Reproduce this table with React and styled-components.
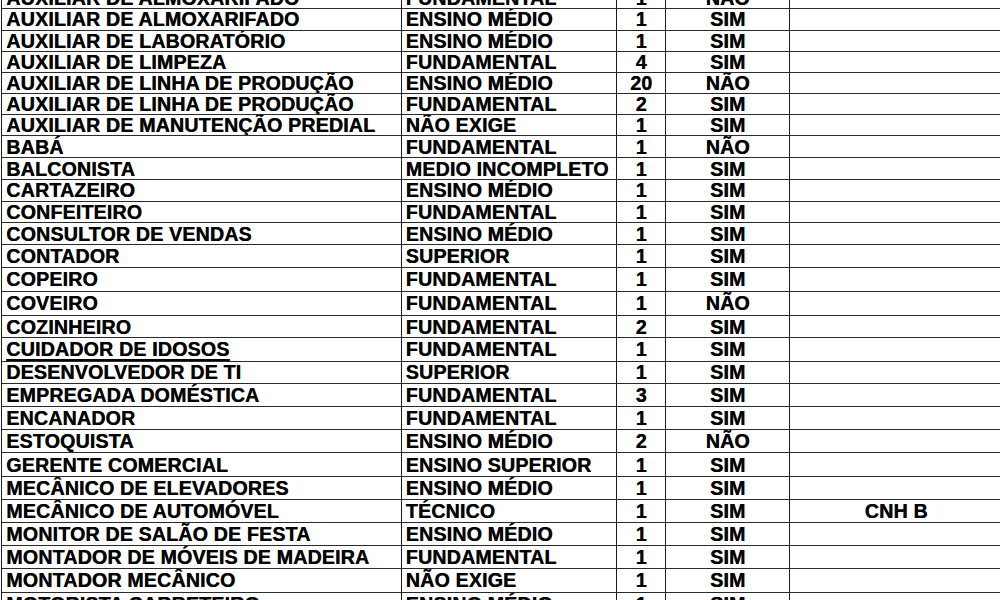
import React from "react";
import styled, { createGlobalStyle } from "styled-components";

const Global = createGlobalStyle`
  html, body { margin: 0; padding: 0; background: #ffffff; }
  body { overflow: hidden; width: 1000px; height: 600px; }
`;

const Page = styled.div`
  width: 1000px;
  height: 600px;
  overflow: hidden;
  background: #fff;
`;

const Table = styled.div`
  margin-top: -12.9px;
  margin-left: 1.25px;
  width: 1004px;
  border-left: 1.5px solid #1c1c1c;
  display: flex;
  flex-direction: column;
  font-family: "Liberation Sans", Arial, sans-serif;
  font-weight: 700;
  font-size: 19.6px;
  letter-spacing: 0.18px;
  color: #050505;
  text-shadow: 0.35px 0 0 #050505;
`;

const Row = styled.div`
  display: grid;
  grid-template-columns: 399.5px 215.5px 49px 124px 213px;
  height: ${(p) => p.$h}px;
  box-sizing: border-box;
  border-bottom: 1.5px solid #2a2a2a;
`;

const Cell = styled.div`
  box-sizing: border-box;
  border-right: 1.5px solid #1c1c1c;
  display: flex;
  align-items: center;
  justify-content: ${(p) => (p.$center ? "center" : "flex-start")};
  padding: 1.5px ${(p) => (p.$center ? "0" : "4px")} 0;
  white-space: nowrap;
  overflow: hidden;
  line-height: 1;
`;

const Under = styled.span`
  text-decoration: underline;
  text-decoration-thickness: 2px;
  text-underline-offset: 2.5px;
`;

const rows = [
  ["AUXILIAR DE ALMOXARIFADO", "FUNDAMENTAL", "1", "NÃO", "", 22.2],
  ["AUXILIAR DE ALMOXARIFADO", "ENSINO MÉDIO", "1", "SIM", "", 21.4],
  ["AUXILIAR DE LABORATÓRIO", "ENSINO MÉDIO", "1", "SIM", "", 21],
  ["AUXILIAR DE LIMPEZA", "FUNDAMENTAL", "4", "SIM", "", 21.6],
  ["AUXILIAR DE LINHA DE PRODUÇÃO", "ENSINO MÉDIO", "20", "NÃO", "", 21],
  ["AUXILIAR DE LINHA DE PRODUÇÃO", "FUNDAMENTAL", "2", "SIM", "", 21],
  ["AUXILIAR DE MANUTENÇÃO PREDIAL", "NÃO EXIGE", "1", "SIM", "", 20.7],
  ["BABÁ", "FUNDAMENTAL", "1", "NÃO", "", 22.3],
  ["BALCONISTA", "MEDIO INCOMPLETO", "1", "SIM", "", 21.7],
  ["CARTAZEIRO", "ENSINO MÉDIO", "1", "SIM", "", 21.7],
  ["CONFEITEIRO", "FUNDAMENTAL", "1", "SIM", "", 21.6],
  ["CONSULTOR DE VENDAS", "ENSINO MÉDIO", "1", "SIM", "", 22],
  ["CONTADOR", "SUPERIOR", "1", "SIM", "", 22.7],
  ["COPEIRO", "FUNDAMENTAL", "1", "SIM", "", 23.7],
  ["COVEIRO", "FUNDAMENTAL", "1", "NÃO", "", 24.3],
  ["COZINHEIRO", "FUNDAMENTAL", "2", "SIM", "", 22.3],
  ["CUIDADOR DE IDOSOS", "FUNDAMENTAL", "1", "SIM", "", 23.4, true],
  ["DESENVOLVEDOR DE TI", "SUPERIOR", "1", "SIM", "", 22.3],
  ["EMPREGADA DOMÉSTICA", "FUNDAMENTAL", "3", "SIM", "", 23.3],
  ["ENCANADOR", "FUNDAMENTAL", "1", "SIM", "", 22.7],
  ["ESTOQUISTA", "ENSINO MÉDIO", "2", "NÃO", "", 23.3],
  ["GERENTE COMERCIAL", "ENSINO SUPERIOR", "1", "SIM", "", 24],
  ["MECÂNICO DE ELEVADORES", "ENSINO MÉDIO", "1", "SIM", "", 22.7],
  ["MECÂNICO DE AUTOMÓVEL", "TÉCNICO", "1", "SIM", "CNH B", 22.7],
  ["MONITOR DE SALÃO DE FESTA", "ENSINO MÉDIO", "1", "SIM", "", 23.3],
  ["MONTADOR DE MÓVEIS DE MADEIRA", "FUNDAMENTAL", "1", "SIM", "", 23.3],
  ["MONTADOR MECÂNICO", "NÃO EXIGE", "1", "SIM", "", 23.4],
  ["MOTORISTA CARRETEIRO", "ENSINO MÉDIO", "1", "SIM", "", 23.4],
];

export default function App() {
  return (
    <Page>
      <Global />
      <Table>
        {rows.map(([cargo, esc, qtd, exp, obs, h, underline], i) => (
          <Row key={i} $h={h}>
            <Cell>{underline ? <Under>{cargo}</Under> : cargo}</Cell>
            <Cell>{esc}</Cell>
            <Cell $center>{qtd}</Cell>
            <Cell $center>{exp}</Cell>
            <Cell $center>{obs}</Cell>
          </Row>
        ))}
      </Table>
    </Page>
  );
}
